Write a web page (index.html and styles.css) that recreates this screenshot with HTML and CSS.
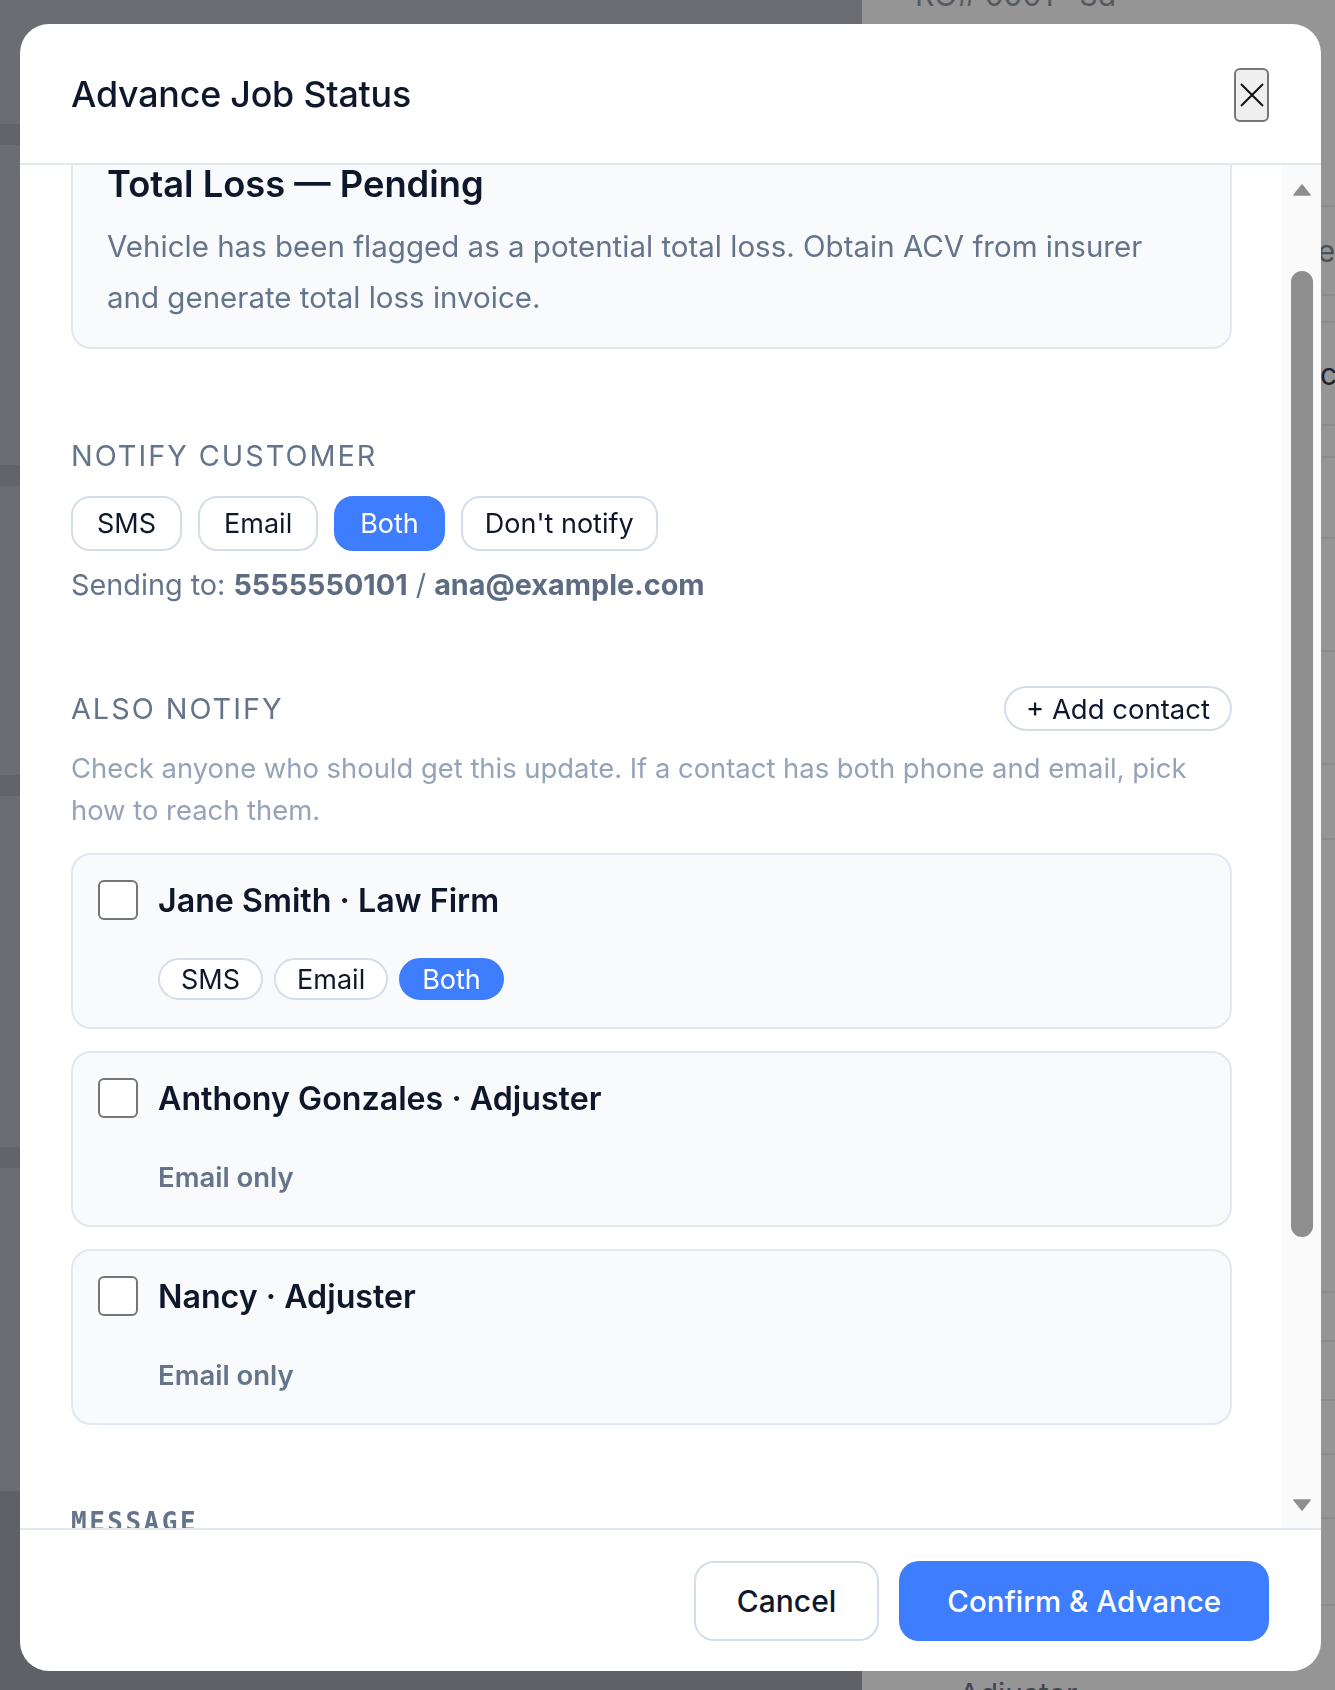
FILE: index.html
```html
<!DOCTYPE html>
<html>
<head>
  <meta charset="UTF-8">
  <title>Advance Job Status</title>
  <link rel="stylesheet" href="styles.css">
</head>
<body>
  <div class="page">
    <div class="page-main">
      <div class="pm-block" style="height:124px"></div>
      <div class="pm-band"></div>
      <div class="pm-block" style="height:320px"></div>
      <div class="pm-band"></div>
      <div class="pm-block" style="height:289px"></div>
      <div class="pm-band"></div>
      <div class="pm-block" style="height:351px"></div>
      <div class="pm-band"></div>
      <div class="pm-block" style="height:323px"></div>
      <div class="pm-foot"></div>
    </div>
    <aside class="page-side">
      <div class="ps-row ps-top" style="height:207px"><span class="ps-ro">RO# 0001 · 3d</span></div>
      <div class="ps-row" style="height:89px"><span class="ps-frag ps-frag-es">Vehicles</span></div>
      <div class="ps-row" style="height:27px"></div>
      <div class="ps-row" style="height:103px"><span class="ps-frag ps-frag-cl">Include</span></div>
      <div class="ps-row" style="height:32px"></div>
      <div class="ps-row" style="height:81px"></div>
      <div class="ps-row" style="height:113px"></div>
      <div class="ps-row" style="height:113px"></div>
      <div class="ps-row" style="height:75px"></div>
      <div class="ps-row" style="height:453px"></div>
      <div class="ps-row" style="height:49px"></div>
      <div class="ps-row" style="height:59px"></div>
      <div class="ps-row" style="height:54px"></div>
      <div class="ps-row" style="height:64px"></div>
      <div class="ps-row" style="height:87px"></div>
      <div class="ps-last"><span class="ps-adj">Adjuster</span></div>
    </aside>
  </div>

  <div class="overlay">
    <div class="modal">
      <header class="modal-head">
        <h2>Advance Job Status</h2>
        <button class="close-btn" aria-label="Close">
          <svg width="24" height="24" viewBox="0 0 24 24"><path d="M1 1 L23 23 M23 1 L1 23" stroke="#111" stroke-width="2" fill="none"/></svg>
        </button>
      </header>

      <div class="modal-body">
        <div class="scroll-content">
          <div class="scroll-inner">
            <div class="stage-box">
              <h3>Total Loss — Pending</h3>
              <p>Vehicle has been flagged as a potential total loss. Obtain ACV from insurer and generate total loss invoice.</p>
            </div>

            <section class="sec-notify">
              <div class="sec-label">Notify customer</div>
              <div class="chips">
                <button class="chip">SMS</button>
                <button class="chip">Email</button>
                <button class="chip active">Both</button>
                <button class="chip">Don't notify</button>
              </div>
              <div class="sending">Sending to: <b>5555550101</b> / <b>ana@example.com</b></div>
            </section>

            <section class="sec-also">
              <div class="sec-row">
                <div class="sec-label">Also notify</div>
                <button class="add-btn">+ Add contact</button>
              </div>
              <p class="helper">Check anyone who should get this update. If a contact has both phone and email, pick how to reach them.</p>

              <div class="contact">
                <label class="contact-row">
                  <input type="checkbox">
                  <span class="contact-name">Jane Smith · Law Firm</span>
                </label>
                <div class="mini-chips">
                  <button class="mini-chip">SMS</button>
                  <button class="mini-chip">Email</button>
                  <button class="mini-chip active">Both</button>
                </div>
              </div>

              <div class="contact">
                <label class="contact-row">
                  <input type="checkbox">
                  <span class="contact-name">Anthony Gonzales · Adjuster</span>
                </label>
                <div class="only">Email only</div>
              </div>

              <div class="contact">
                <label class="contact-row">
                  <input type="checkbox">
                  <span class="contact-name">Nancy · Adjuster</span>
                </label>
                <div class="only">Email only</div>
              </div>
            </section>

            <div class="msg-label">MESSAGE</div>
          </div>
        </div>

        <div class="scrollbar">
          <svg class="sb-arrow sb-up" width="18" height="12" viewBox="0 0 18 12"><path d="M9 1 L17 11 L1 11 Z" fill="#8e8e8e" stroke="#8e8e8e" stroke-width="1.5" stroke-linejoin="round"/></svg>
          <div class="sb-thumb"></div>
          <div class="sb-fill"></div>
          <svg class="sb-arrow sb-down" width="18" height="12" viewBox="0 0 18 12"><path d="M1 1 L17 1 L9 11 Z" fill="#8e8e8e" stroke="#8e8e8e" stroke-width="1.5" stroke-linejoin="round"/></svg>
        </div>
      </div>

      <footer class="modal-foot">
        <button class="btn-cancel">Cancel</button>
        <button class="btn-confirm">Confirm &amp; Advance</button>
      </footer>
    </div>
  </div>
</body>
</html>
```

FILE: styles.css
```css
* { box-sizing: border-box; }
body { margin: 0; font-family: "Inter", "Liberation Sans", sans-serif; color: #0f172a; overflow: hidden; }
button { font-family: inherit; cursor: pointer; }

/* page behind the dialog */
.page { display: flex; height: 1690px; }
.page-main { width: 862px; display: flex; flex-direction: column; background: #6b6d72; }
.pm-band { height: 21px; background: #626469; }
.pm-foot { flex: 1; background: #606166; }
.page-side { flex: 1; background: #959595; overflow: hidden; display: flex; flex-direction: column; }
.ps-row { border-bottom: 2px solid #8b8b8b; display: flex; align-items: center; justify-content: flex-end; flex-shrink: 0; }
.ps-top { align-items: flex-start; justify-content: flex-start; }
.ps-ro { margin: -23px 0 0 53px; font-size: 30px; color: #55585e; }
.ps-frag { font-size: 30px; color: #4b4f57; white-space: nowrap; }
.ps-frag-es { margin-right: -16px; }
.ps-frag-cl { margin-right: -63px; color: #1e2230; }
.ps-last { flex: 1; display: flex; align-items: flex-end; }
.ps-adj { margin: 0 0 -22px 97px; font-size: 30px; color: #44474d; }

/* overlay + modal */
.overlay { position: fixed; inset: 0; padding: 24px 14px 19px 20px; display: flex; }
.modal { flex: 1; background: #fff; border-radius: 29px; overflow: hidden; display: flex; flex-direction: column; }

.modal-head { height: 141px; flex-shrink: 0; border-bottom: 2px solid #e2e8f0; padding: 0 52px 0 51px; display: flex; align-items: center; justify-content: space-between; }
.modal-head h2 { margin: 0; font-size: 35.8px; font-weight: 500; color: #0f172a; letter-spacing: -0.2px; }
.close-btn { width: 35px; height: 54px; padding: 0; background: #efefef; border: 2px solid #767676; border-radius: 6px; display: flex; align-items: center; justify-content: center; margin-top: 2px; }

.modal-body { flex: 1; display: flex; min-height: 0; }
.scroll-content { flex: 1; overflow: hidden; padding: 0 50px 0 51px; }
.scroll-inner { margin-top: -33px; }

.stage-box { background: #f8fafc; border: 2px solid #e2e8f0; border-radius: 20px; padding: 28px 35px 25px 34px; }
.stage-box h3 { margin: 0 0 14px; font-size: 36.3px; line-height: 45px; font-weight: 600; }
.stage-box p { margin: 0; font-size: 29.5px; line-height: 50.5px; color: #64748b; }

.sec-label { font-size: 28.8px; line-height: 40px; letter-spacing: 2px; text-transform: uppercase; color: #64748b; }
.sec-notify { margin-top: 87px; }
.chips { display: flex; gap: 16px; margin-top: 20px; }
.chip { height: 55px; padding: 0 24px; font-size: 27px; color: #0f172a; background: #fff; border: 2px solid #d5dde8; border-radius: 19px; }
.chip:last-child { padding: 0 22px; }
.chip.active, .mini-chip.active { background: #3e7dfd; border-color: #3e7dfd; color: #fff; }
.sending { margin-top: 12px; font-size: 28.8px; line-height: 43px; color: #64748b; }
.sending b { font-weight: 700; color: #5d6c83; }

.sec-also { margin-top: 80px; }
.sec-row { display: flex; align-items: center; justify-content: space-between; height: 45px; }
.add-btn { height: 45px; padding: 0 20px; font-size: 27.5px; color: #0f172a; background: #fff; border: 2px solid #d5dde8; border-radius: 23px; }
.helper { margin: 16px 0 0; font-size: 27.4px; line-height: 42px; color: #94a3b8; }

.contact { margin-top: 22px; background: #f8fafc; border: 2px solid #e2e8f0; border-radius: 20px; padding: 25px 25px 27px; }
.contact-row { display: flex; align-items: center; gap: 20px; height: 40px; }
.contact-row input { appearance: none; -webkit-appearance: none; margin: 0; width: 40px; height: 40px; background: #fff; border: 2px solid #767676; border-radius: 6px; flex-shrink: 0; }
.contact-name { font-size: 32.2px; font-weight: 600; color: #0f172a; }
.mini-chips { display: flex; gap: 11px; margin: 38px 0 0 60px; }
.mini-chip { height: 42px; padding: 0 21px; font-size: 27px; color: #0f172a; background: #fff; border: 2px solid #d5dde8; border-radius: 21px; }
.only { margin: 38px 0 0 60px; height: 42px; line-height: 42px; font-size: 27.5px; font-weight: 600; color: #64748b; }

.msg-label { margin-top: 82px; font-family: "DejaVu Sans Mono", monospace; font-weight: 700; font-size: 26px; line-height: 30px; letter-spacing: 2.5px; color: #64748b; }

/* fake classic scrollbar */
.scrollbar { width: 39px; flex-shrink: 0; background: #fafafa; display: flex; flex-direction: column; align-items: center; }
.sb-up { margin-top: 19px; }
.sb-thumb { margin-top: 75px; width: 22px; height: 966px; background: #8e8e8e; border-radius: 11px; }
.sb-fill { flex: 1; }
.sb-down { margin-bottom: 17px; }

.modal-foot { height: 143px; flex-shrink: 0; border-top: 2px solid #e2e8f0; padding: 0 52px; display: flex; align-items: center; justify-content: flex-end; gap: 20px; }
.btn-cancel { height: 80px; padding: 0 41px; font-size: 30px; font-weight: 500; color: #0f172a; background: #fff; border: 2px solid #d5dde8; border-radius: 20px; }
.btn-confirm { height: 80px; padding: 0 48px; font-size: 29.5px; font-weight: 500; color: #fff; background: #3e7dfd; border: 0; border-radius: 20px; }
```
